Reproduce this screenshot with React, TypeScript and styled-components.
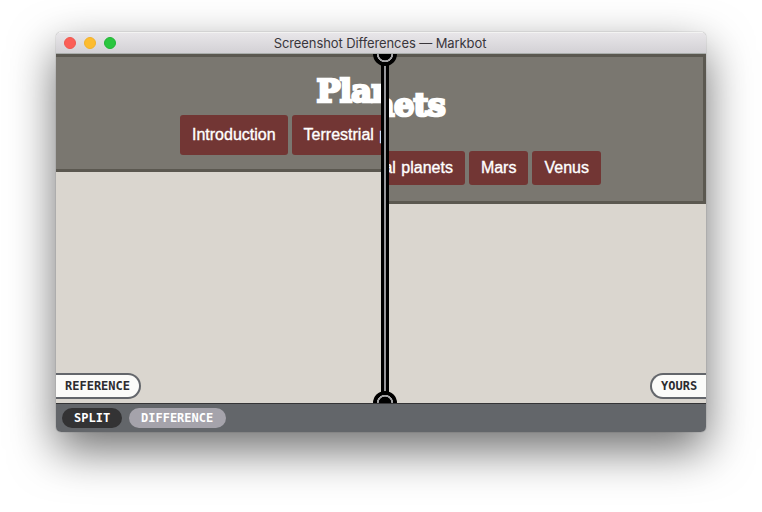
import React from 'react';
import styled, { createGlobalStyle, css } from 'styled-components';

const GlobalStyle = createGlobalStyle`
  * { box-sizing: border-box; }
  html, body { margin: 0; background: #fff; overflow: hidden; }
`;

const Desktop = styled.div`
  width: 762px;
  height: 512px;
  padding: 32px 56px 80px;
  overflow: hidden;
  background: #fff;
`;

const Window = styled.div`
  width: 650px;
  height: 400px;
  border-radius: 5px;
  box-shadow: 0 0 1px rgba(0, 0, 0, 0.6), 0 18px 46px rgba(0, 0, 0, 0.57);
`;

const WindowBody = styled.div`
  display: flex;
  flex-direction: column;
  height: 100%;
  border-radius: 5px;
  overflow: hidden;
`;

const TitleBar = styled.header`
  display: grid;
  grid-template-columns: 70px 1fr 71px;
  align-items: center;
  flex: none;
  height: 22px;
  padding-left: 8px;
  background: linear-gradient(#e8e6e9, #d3d1d5);
  border-top: 1px solid #f3f3f2;
  border-bottom: 1px solid #aaaeac;
`;

const Lights = styled.div`
  display: flex;
  gap: 8px;
`;

const Light = styled.span<{ $color: string; $edge: string }>`
  width: 12px;
  height: 12px;
  border-radius: 50%;
  background: ${(p) => p.$color};
  border: 1px solid ${(p) => p.$edge};
`;

const WindowTitle = styled.h1`
  margin: 0 0 0 -9px;
  text-align: center;
  white-space: nowrap;
  font: 400 13px/20px Inter, sans-serif;
  letter-spacing: -0.1px;
  color: #39363b;
`;

const Comparison = styled.main`
  position: relative;
  display: grid;
  grid-template-columns: 329px 321px;
  height: 349px;
  flex: none;
  overflow: hidden;
`;

const Pane = styled.section<{ $side: 'left' | 'right' }>`
  position: relative;
  display: flex;
  justify-content: ${(p) => (p.$side === 'left' ? 'flex-start' : 'flex-end')};
  overflow: hidden;
  background: #dad6cf;
`;

const Page = styled.div`
  flex: none;
  width: 650px;
`;

const Banner = styled.div<{ $height: number; $top: number }>`
  display: flex;
  flex-direction: column;
  height: ${(p) => p.$height}px;
  padding-top: ${(p) => p.$top}px;
  background: #7a7770;
  border: 3px solid #5b5850;
  border-left: 0;
`;

const Heading = styled.h2`
  flex: none;
  margin: 0 0 0 260.5px;
  font: 700 32px/40px 'DejaVu Serif', serif;
  letter-spacing: -0.7px;
  white-space: nowrap;
  color: #fff;
  -webkit-text-stroke: 2.6px #fff;
`;

const Nav = styled.nav<{ $gap: number; $indent: number }>`
  display: flex;
  gap: 4px;
  margin: ${(p) => p.$gap}px 0 0 ${(p) => p.$indent}px;
`;

const NavLink = styled.a<{ $height: number }>`
  height: ${(p) => p.$height}px;
  padding: 0 12px;
  border-radius: 3px;
  background: #723634;
  color: #fff;
  font: 400 16px/${(p) => p.$height - 1}px 'Liberation Sans', sans-serif;
  word-spacing: 1px;
  -webkit-text-stroke: 0.35px #fff;
  white-space: nowrap;
`;

const Tag = styled.div<{ $side: 'left' | 'right' }>`
  position: absolute;
  bottom: 4px;
  height: 26px;
  border: 2px solid #63666b;
  background: #fbfbf9;
  color: #2c2c30;
  font: 700 12px/22px 'DejaVu Sans Mono', monospace;
  ${(p) =>
    p.$side === 'left'
      ? css`
          left: 0;
          width: 85px;
          padding-left: 9px;
          border-left: 0;
          border-radius: 0 13px 13px 0;
        `
      : css`
          right: 0;
          width: 56px;
          padding-left: 9px;
          border-right: 0;
          border-radius: 13px 0 0 13px;
        `}
`;

const Divider = styled.div`
  position: absolute;
  top: 0;
  bottom: 0;
  left: 325px;
  width: 8px;
  border: solid #000;
  border-width: 0 3px;
  background: #96969a;
`;

const Handle = styled.span<{ $end: 'top' | 'bottom' }>`
  position: absolute;
  ${(p) => p.$end}: -12px;
  left: -11px;
  width: 24px;
  height: 24px;
  border-radius: 50%;
  background: radial-gradient(circle, #000 6px, #a6a6a8 6.6px 7.9px, #000 8.5px);
`;

const Footer = styled.footer`
  display: flex;
  gap: 7px;
  flex: 1;
  padding: 4px 6px;
  background: #63666a;
  border-top: 1px solid #343436;
`;

const Mode = styled.button<{ $active?: boolean }>`
  height: 20px;
  width: ${(p) => (p.$active ? 60 : 97)}px;
  padding: 0 0 0 12px;
  border: 0;
  border-radius: 10px;
  background: ${(p) => (p.$active ? '#333334' : '#a5a3ab')};
  color: #fff;
  text-align: left;
  font: 700 12px/20px 'DejaVu Sans Mono', monospace;
`;

type ShotProps = {
  side: 'left' | 'right';
  height: number;
  top: number;
  gap: number;
  indent: number;
  linkHeight: number;
  label: string;
};

const links = ['Introduction', 'Terrestrial planets', 'Mars', 'Venus'];

function Shot({ side, height, top, gap, indent, linkHeight, label }: ShotProps) {
  return (
    <Pane $side={side}>
      <Page>
        <Banner $height={height} $top={top}>
          <Heading>Planets</Heading>
          <Nav $gap={gap} $indent={indent}>
            {links.map((link) => (
              <NavLink key={link} $height={linkHeight}>{link}</NavLink>
            ))}
          </Nav>
        </Banner>
      </Page>
      <Tag $side={side}>{label}</Tag>
    </Pane>
  );
}

export default function App() {
  return (
    <>
      <GlobalStyle />
      <Desktop>
        <Window>
          <WindowBody>
            <TitleBar>
              <Lights>
                <Light $color="#fb5e56" $edge="#ee584f" />
                <Light $color="#fdbc2f" $edge="#f1b12b" />
                <Light $color="#2ac63f" $edge="#21b535" />
              </Lights>
              <WindowTitle>Screenshot Differences — Markbot</WindowTitle>
            </TitleBar>
            <Comparison>
              <Shot side="left" height={118} top={14} gap={4} indent={124} linkHeight={40} label="REFERENCE" />
              <Shot side="right" height={150} top={28} gap={26} indent={146} linkHeight={34} label="YOURS" />
              <Divider>
                <Handle $end="top" />
                <Handle $end="bottom" />
              </Divider>
            </Comparison>
            <Footer>
              <Mode $active>SPLIT</Mode>
              <Mode>DIFFERENCE</Mode>
            </Footer>
          </WindowBody>
        </Window>
      </Desktop>
    </>
  );
}
